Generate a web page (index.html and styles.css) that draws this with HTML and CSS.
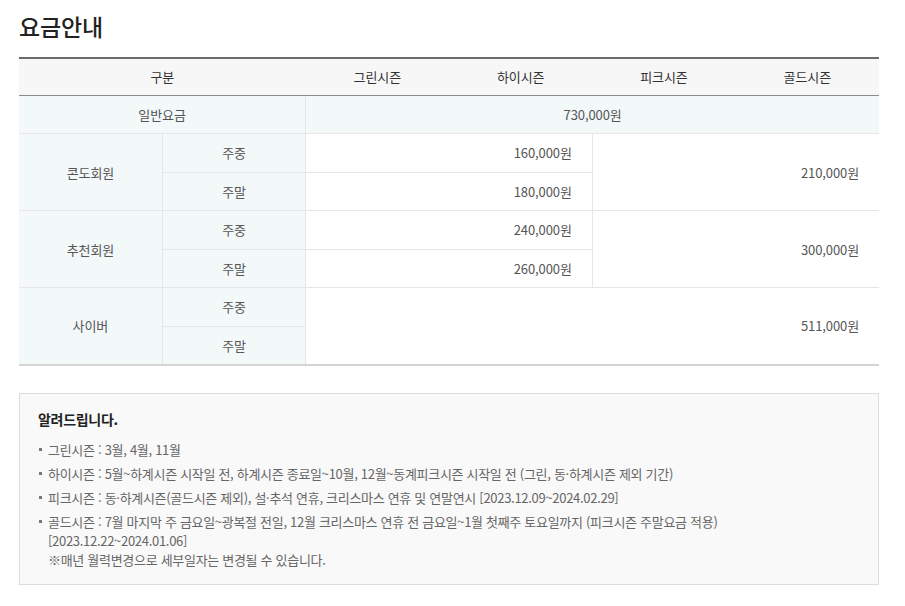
FILE: index.html
```html
<!DOCTYPE html>
<html lang="ko">
<head>
<meta charset="utf-8">
<title>요금안내</title>
<link rel="stylesheet" href="styles.css">
</head>
<body>
<div class="page">
  <h2 class="title">요금안내</h2>
  <table class="fee">
    <colgroup>
      <col><col><col><col><col><col>
    </colgroup>
    <thead>
      <tr>
        <th colspan="2">구분</th>
        <th>그린시즌</th>
        <th>하이시즌</th>
        <th>피크시즌</th>
        <th>골드시즌</th>
      </tr>
    </thead>
    <tbody>
      <tr class="tint">
        <td colspan="2" class="lbl">일반요금</td>
        <td colspan="4" class="center">730,000원</td>
      </tr>
      <tr>
        <td rowspan="2" class="lbl">콘도회원</td>
        <td class="lbl">주중</td>
        <td colspan="2" class="price">160,000원</td>
        <td colspan="2" rowspan="2" class="price">210,000원</td>
      </tr>
      <tr>
        <td class="lbl">주말</td>
        <td colspan="2" class="price">180,000원</td>
      </tr>
      <tr>
        <td rowspan="2" class="lbl">추천회원</td>
        <td class="lbl">주중</td>
        <td colspan="2" class="price">240,000원</td>
        <td colspan="2" rowspan="2" class="price">300,000원</td>
      </tr>
      <tr>
        <td class="lbl">주말</td>
        <td colspan="2" class="price">260,000원</td>
      </tr>
      <tr>
        <td rowspan="2" class="lbl">사이버</td>
        <td class="lbl">주중</td>
        <td colspan="4" rowspan="2" class="price">511,000원</td>
      </tr>
      <tr>
        <td class="lbl">주말</td>
      </tr>
    </tbody>
  </table>

  <div class="notice">
    <h3 class="notice-title">알려드립니다.</h3>
    <ul class="notice-list">
      <li>그린시즌 : 3월, 4월, 11월</li>
      <li>하이시즌 : 5월~하계시즌 시작일 전, 하계시즌 종료일~10월, 12월~동계피크시즌 시작일 전 (그린, 동·하계시즌 제외 기간)</li>
      <li>피크시즌 : 동·하계시즌(골드시즌 제외), 설·추석 연휴, 크리스마스 연휴 및 연말연시 [2023.12.09~2024.02.29]</li>
      <li>골드시즌 : 7월 마지막 주 금요일~광복절 전일, 12월 크리스마스 연휴 전 금요일~1월 첫째주 토요일까지 (피크시즌 주말요금 적용)<br>[2023.12.22~2024.01.06]<br>※매년 월력변경으로 세부일자는 변경될 수 있습니다.</li>
    </ul>
  </div>
</div>
</body>
</html>
```

FILE: styles.css
```css
* { box-sizing: border-box; }
html, body { margin: 0; padding: 0; background: #fff; }
body {
  font-family: "Noto Sans CJK KR", "Noto Sans", sans-serif;
  color: #555;
}
.page {
  padding: 10px 26px 0 19px;
}
.title {
  margin: 0 0 15px;
  font-size: 23px;
  line-height: 32px;
  font-weight: 500;
  color: #222;
  letter-spacing: -0.2px;
}
.fee {
  width: 860px;
  border-collapse: collapse;
  table-layout: fixed;
  border-top: 2px solid #6b6b6b;
  border-bottom: 2px solid #d4d4d4;
  font-size: 13px;
  letter-spacing: -0.1px;
}
.fee th {
  height: 37px;
  padding: 0;
  background: #f7f7f7;
  font-weight: 400;
  color: #333;
  text-align: center;
  border-bottom: 1px solid #8a8a8a;
}
.fee td {
  height: 38.5px;
  padding: 0 20px;
  border: 1px solid #e6e6e6;
  color: #555;
  background: #fff;
}
.fee tr td:first-child { border-left: 0; }
.fee tr td:last-child { border-right: 0; }
.fee td.lbl {
  background: #f3f8f9;
  text-align: center;
  padding: 0;
}
.fee tr.tint td { background: #f3f8f9; }
.fee td.center { text-align: center; }
.fee td.price { text-align: right; }
.fee tbody tr:last-child td { border-bottom: 0; }

.notice {
  width: 860px;
  margin-top: 27px;
  padding: 15px 18px 15px;
  background: #f9f9f9;
  border: 1px solid #dddddd;
}
.notice-title {
  margin: 0 0 11px;
  font-size: 14px;
  line-height: 20px;
  font-weight: 700;
  color: #222;
  letter-spacing: -0.3px;
}
.notice-list {
  list-style: none;
  margin: 0;
  padding: 0;
  font-size: 13px;
  line-height: 19px;
  color: #666;
  letter-spacing: -0.3px;
}
.notice-list li {
  position: relative;
  padding-left: 10px;
  margin-top: 5px;
}
.notice-list li:first-child { margin-top: 0; }
.notice-list li::before {
  content: "";
  position: absolute;
  left: 1px;
  top: 8px;
  width: 3px;
  height: 3px;
  background: #777;
}
```
